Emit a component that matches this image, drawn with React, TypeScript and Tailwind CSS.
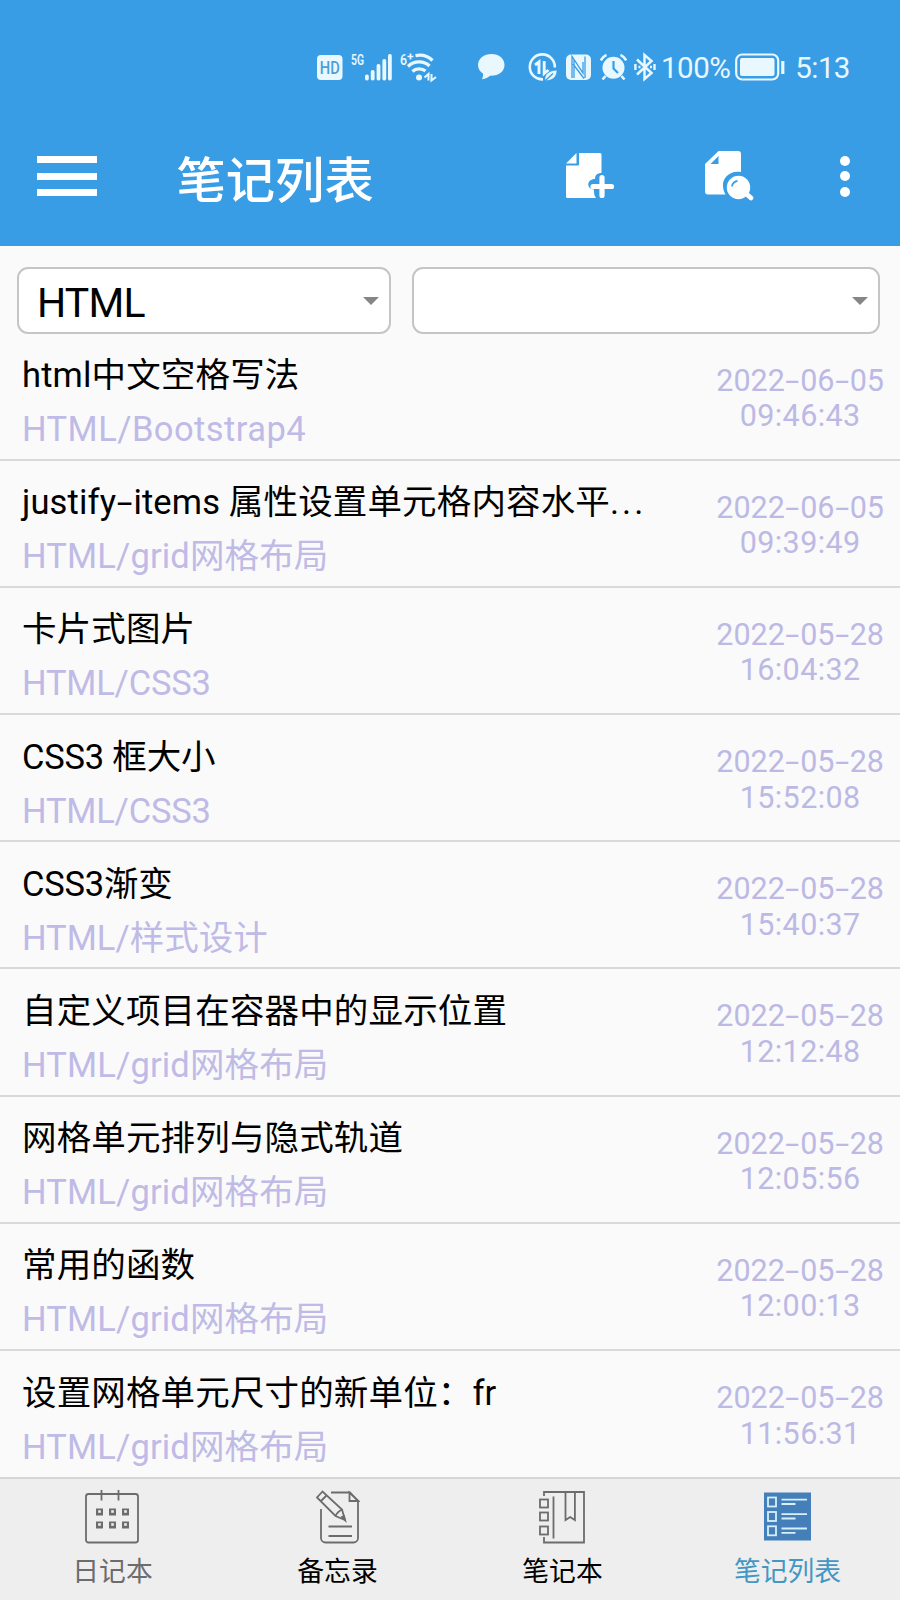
import { clsx } from "clsx";

const notes = [
  { title: "html中文空格写法", path: "HTML/Bootstrap4", date: "2022-06-05", time: "09:46:43" },
  {
    title: "justify-items 属性设置单元格内容水平",
    more: true,
    path: "HTML/grid网格布局",
    date: "2022-06-05",
    time: "09:39:49",
  },
  { title: "卡片式图片", path: "HTML/CSS3", date: "2022-05-28", time: "16:04:32" },
  { title: "CSS3 框大小", path: "HTML/CSS3", date: "2022-05-28", time: "15:52:08" },
  { title: "CSS3渐变", path: "HTML/样式设计", date: "2022-05-28", time: "15:40:37" },
  { title: "自定义项目在容器中的显示位置", path: "HTML/grid网格布局", date: "2022-05-28", time: "12:12:48" },
  { title: "网格单元排列与隐式轨道", path: "HTML/grid网格布局", date: "2022-05-28", time: "12:05:56" },
  { title: "常用的函数", path: "HTML/grid网格布局", date: "2022-05-28", time: "12:00:13" },
  { title: "设置网格单元尺寸的新单位：fr", path: "HTML/grid网格布局", date: "2022-05-28", time: "11:56:31" },
];

const tracking = (text: string) => {
  if (text.includes("Bootstrap")) return "tracking-[0.45px]";
  if (text.includes("CSS3")) return "tracking-[-0.2px]";
  if (text.includes("样式")) return "";
  return "tracking-[0.15px]";
};

// draws the hyphens wider than the font does
function Dashed({ text }: { text: string }) {
  return (
    <>
      {text.split("-").map((part, i) => (
        <span key={i}>
          {i > 0 && (
            <span className="inline-block w-[0.5em] text-center">
              <span className="inline-block scale-x-[1.65]">-</span>
            </span>
          )}
          {part}
        </span>
      ))}
    </>
  );
}

function StatusBar() {
  return (
    <div className="flex h-[134px] items-center pl-[317px] text-[#e9f7ff]">
      {/* HD */}
      <svg width="26" height="28" viewBox="0 0 26 28" fill="currentColor">
        <rect x="0" y="2" width="25.500" height="25" rx="4" />
        <text x="2.800" y="20.700" fontSize="17.500" fontWeight="500" textLength="20" lengthAdjust="spacingAndGlyphs" fill="#4a9fdb" fontFamily="Roboto, sans-serif">
          HD
        </text>
      </svg>
      {/* 5G signal */}
      <svg className="ml-2 overflow-visible" width="41" height="28" viewBox="0 0 41 28" fill="currentColor">
        <text x="0" y="12" fontSize="15" fontWeight="600" textLength="13" lengthAdjust="spacingAndGlyphs" fontFamily="Roboto, sans-serif">
          5G
        </text>
        <rect x="14" y="21.500" width="3.800" height="6" rx="1.700" />
        <rect x="19.800" y="17" width="3.800" height="10.500" rx="1.700" />
        <rect x="25.600" y="11" width="3.800" height="16.500" rx="1.700" />
        <rect x="31.400" y="6" width="3.800" height="21.500" rx="1.700" />
        <rect x="37" y="1" width="3.800" height="26.500" rx="1.700" />
      </svg>
      {/* wifi 6+ */}
      <svg className="ml-2 overflow-visible" width="37" height="28" viewBox="0 0 37 28" fill="none" stroke="currentColor" strokeWidth="3.200">
        <text x="0" y="11.500" fontSize="14.500" fontWeight="600" fill="currentColor" stroke="none" textLength="7" lengthAdjust="spacingAndGlyphs" fontFamily="Roboto, sans-serif">
          6
        </text>
        <path d="M7.500 3.500h6M10.500.500v6" strokeWidth="1.700" />
        <path d="M15.500 2.600C22 1.400 28 3 32.500 7.500" />
        <path d="M8 13.500C14 7.500 24 7.500 29.500 13" />
        <path d="M12.500 18.500C16 15 22 15 25.500 18" />
        <circle cx="19" cy="24.500" r="3" fill="currentColor" stroke="none" />
        <path d="M24.500 24.500L28.500 21v6.500M31.500 21v6.500l4.500-3.500" strokeWidth="2" />
      </svg>
      {/* message */}
      <svg className="ml-[41px]" width="27" height="28" viewBox="0 0 27 28" fill="currentColor">
        <path d="M13.500 1C6 1 0 5.500 0 12c0 3.600 2 6.700 5 8.600.3 2-.2 4-1 5.600 3.500-.2 6-1.600 8-3.400 8.500.4 14.500-4.300 14.500-10.800S21 1 13.500 1z" />
      </svg>
      {/* data saver */}
      <svg className="ml-[23px]" width="29" height="30" viewBox="0 0 29 30" fill="none" stroke="currentColor">
        <path d="M15 27.400A12.500 12.500 0 1 1 26.800 15.500" strokeWidth="2.600" />
        <path d="M7 13L11 10v12" strokeWidth="2.900" />
        <path d="M16.200 9v12.500L20.500 18" strokeWidth="2.900" />
        <path d="M17 28.500c-1-6.500 4-10 12-10.500.3 7-5 11.500-12 10.500z" fill="currentColor" stroke="#399de5" strokeWidth=".800" />
        <path d="M17.500 28.500L25 21.500" stroke="#399de5" strokeWidth="1.300" />
      </svg>
      {/* nfc */}
      <svg className="ml-[9px]" width="26" height="28" viewBox="0 0 26 28">
        <rect x="0" y="1.500" width="25" height="25.500" rx="5" fill="currentColor" />
        <path d="M6 25V3.500L17 20V9M8 7v18M19 25V3.500M7 11l11 14.500" fill="none" stroke="#399de5" strokeWidth="1.300" />
      </svg>
      {/* alarm */}
      <svg className="ml-2" width="27" height="28" viewBox="0 0 27 28" fill="none" stroke="currentColor" strokeWidth="2.600">
        <circle cx="13.500" cy="14.800" r="11" fill="currentColor" stroke="none" />
        <path d="M.800 7.500C2 5 4 3 6.500 1.800M26.200 7.500C25 5 23 3 20.500 1.800M5.500 23l-3 3.500M21.500 23l3 3.500" />
        <path d="M13.500 8v7.500l4.500 4.500" stroke="#399de5" strokeWidth="2.200" />
      </svg>
      {/* bluetooth */}
      <svg className="ml-[7px]" width="22" height="30" viewBox="0 0 22 30" fill="none" stroke="currentColor" strokeWidth="2.500">
        <path d="M3 7.500L17.500 21l-7 6V3l7 6L3 22.500" />
        <path d="M1.400 12v6M4.500 15h2M16 15h2M20.500 12v6" strokeWidth="2.400" />
      </svg>
      <span className="ml-[5px] mt-[4px] text-[29.500px] leading-none tracking-[-0.5px]">100%</span>
      {/* battery */}
      <svg className="ml-[5px]" width="51" height="28" viewBox="0 0 51 28" fill="none" stroke="currentColor">
        <rect x="1.200" y="1.500" width="42" height="25" rx="6" strokeWidth="2.200" />
        <rect x="5" y="5" width="34.500" height="18" rx="2" fill="currentColor" stroke="none" />
        <path d="M47.800 8v13" strokeWidth="3.200" />
      </svg>
      <span className="ml-[9px] mt-[4px] text-[29.500px] leading-none tracking-[-0.6px]">5:13</span>
    </div>
  );
}

function Header() {
  return (
    <header className="h-[246px] shrink-0 bg-[#399de5]">
      <StatusBar />
      <div className="flex h-[84px] items-center text-white">
        <button className="ml-[36.500px] flex w-[60.500px] flex-col gap-[9.500px]">
          <span className="h-[7px] w-full bg-white" />
          <span className="h-[7px] w-full bg-white" />
          <span className="h-[7px] w-full bg-white" />
        </button>
        <h1 className="ml-[79.500px] mt-[11px] w-[200px] text-[49.300px] font-medium leading-none whitespace-nowrap">笔记列表</h1>
        <button className="ml-[189px]">
          <svg width="49" height="50" viewBox="0 0 49 50" fill="currentColor">
            <path d="M13 2h21a1.500 1.500 0 0 1 1.500 1.500V22c-4 0-6.500 2-6.500 6-8.500 0-9 10-1 10.500v1.500c0 3 .5 5 2 7H1.500A1.500 1.500 0 0 1 0 45.500V14.500h12a1 1 0 0 0 1-1z" />
            <path d="M10.500 2v10.500H0z" />
            <path d="M36 26.500v18M27 35.500h18.500" stroke="currentColor" strokeWidth="5.200" strokeLinecap="round" />
          </svg>
        </button>
        <button className="ml-[90px]">
          <svg width="50" height="52" viewBox="0 0 50 52" fill="currentColor">
            <path fillRule="evenodd" d="M13.500 1H33a3 3 0 0 1 3 3v18c-11-2-19 6-18 14.500.3 3 1 5.500 2.500 8H3a3 3 0 0 1-3-3V14zM13.500 6v8H5.500z" />
            <circle cx="33.500" cy="37.500" r="11.700" />
            <path d="M41 43.500l5 4.500" stroke="currentColor" strokeWidth="4.800" strokeLinecap="round" />
            <path d="M27 36.500c.3-3 2.500-5 5.500-5.600" fill="none" stroke="#399de5" strokeWidth="1.800" />
          </svg>
        </button>
        <button className="ml-[85px] flex flex-col gap-[5.500px]">
          <span className="h-2.5 w-2.5 rounded-full bg-white" />
          <span className="h-2.5 w-2.5 rounded-full bg-white" />
          <span className="h-2.5 w-2.5 rounded-full bg-white" />
        </button>
      </div>
    </header>
  );
}

function Dropdown({ value, className }: { value: string; className: string }) {
  return (
    <div className={clsx("flex h-[67px] items-center justify-between rounded-[11px] border-2 border-[#c5c5c5] bg-white", className)}>
      <span className="pl-[18px] pt-[5px] text-[41px] leading-none tracking-[-0.8px]">{value}</span>
      <svg width="16" height="8" viewBox="0 0 16 8" fill="#868686">
        <path d="M0 0h16L8 8z" />
      </svg>
    </div>
  );
}

function CalendarIcon() {
  return (
    <svg className="mr-px" width="54" height="54" viewBox="0 0 54 54" fill="none" stroke="#6c6c6c" strokeWidth="1.800">
      <rect x="1" y="4" width="52" height="48.500" rx="2.500" />
      <path d="M16.500 0v10.500M33.500 0v10.500" />
      {[14.5, 27.5, 40.5].map((x) =>
        [21.5, 34.5].map((y) => (
          <g key={x + "-" + y}>
            <rect x={x - 3.5} y={y - 3} width="7" height="7" fill="#6c6c6c" stroke="none" />
            <rect x={x - 1.3} y={y - 1.3} width="2.600" height="2.600" fill="#eee" stroke="none" />
          </g>
        ))
      )}
    </svg>
  );
}

function MemoIcon() {
  return (
    <svg width="44" height="54" viewBox="0 0 44 54" fill="none" stroke="#6c6c6c" strokeWidth="1.800">
      <path d="M15 2.500h19l8 8.500v37a4.500 4.500 0 0 1-4.500 4.500H9.500A4.500 4.500 0 0 1 5 48V19" />
      <path d="M33.500 2.500V11h9z" />
      <path d="M6.500 1.500L1 7.500 19.500 26l9.500 4-3-10.500zM10.500 5.500L4.500 11.500M26 19.500c-2 1-5.500 4-6.500 6.500M12.500 36.500H36M12.500 46H36" />
      <path d="M26 27l3 3-1-4z" fill="#6c6c6c" />
    </svg>
  );
}

function NotebookIcon() {
  return (
    <svg className="mr-0.5" width="46" height="54" viewBox="0 0 46 54" fill="none" stroke="#6c6c6c" strokeWidth="1.800">
      <path d="M5 6V2h40v50.500H5V47M14.500 6.500v42M26.500 2v28l4.700-3 4.700 3V2" />
      <rect x="1" y="9.500" width="8" height="8" />
      <rect x="1" y="22.500" width="8" height="8" />
      <rect x="1" y="36.500" width="8" height="8" />
    </svg>
  );
}

function ListIcon() {
  return (
    <svg width="47" height="54" viewBox="0 0 47 54" fill="none" stroke="#d5f0fb" strokeWidth="1.800">
      <rect x="0" y="2.500" width="47" height="48" fill="#447fb9" stroke="none" />
      {[12, 26.5, 40.8].map((y) => (
        <g key={y}>
          <rect x="4" y={y - 4.5} width="8" height="9" />
          <path d={`M17.500 ${y - 2.3}h25.500M17.500 ${y + 2}h14`} />
        </g>
      ))}
    </svg>
  );
}

const tabs = [
  { label: "日记本", icon: <CalendarIcon />, color: "text-[#6c6c6c]" },
  { label: "备忘录", icon: <MemoIcon />, color: "text-black" },
  { label: "笔记本", icon: <NotebookIcon />, color: "text-black" },
  { label: "笔记列表", icon: <ListIcon />, color: "text-[#4297c4]" },
];

export default function App() {
  return (
    <div className="flex h-[1600px] w-[900px] flex-col overflow-hidden bg-[#fafafa] font-[Roboto,'Noto_Sans_CJK_SC',sans-serif] text-black">
      <Header />
      <div className="flex h-[87.500px] shrink-0 pl-[17px] pt-[21px]">
        <Dropdown value="HTML" className="w-[374px] pr-[10.500px]" />
        <Dropdown value="" className="ml-[21px] w-[468px] pr-[10.500px]" />
      </div>

      <main className="flex-1 overflow-hidden">
        {notes.map((note) => (
          <div key={note.title} className="flex h-[127.200px] justify-between border-b-2 border-[#d9d9d9] pl-[22px] pr-[16px] last:border-b-0">
            <div className="pt-[17.500px] whitespace-nowrap">
              <p className={clsx("text-[34.500px] leading-[48px]", tracking(note.title))}>
                <Dashed text={note.title} />
                {note.more && <span className="tracking-[3px]">...</span>}
              </p>
              <p className={clsx("mt-[6px] text-[34.500px] leading-[48px] text-[#bfbae6]", tracking(note.path))}>{note.path}</p>
            </div>
            <div className="pt-[29px] text-center text-[30.500px] leading-[35.500px] text-[#bcb9e5]">
              <p>
                <Dashed text={note.date} />
              </p>
              <p className="tracking-[0.4px]">{note.time}</p>
            </div>
          </div>
        ))}
      </main>

      <nav className="grid h-[123px] shrink-0 grid-cols-4 border-t-2 border-[#d6d6d6] bg-[#eeeeee]">
        {tabs.map((tab) => (
          <div key={tab.label} className={clsx("flex flex-col items-center pt-[11px]", tab.color)}>
            {tab.icon}
            <span className="mt-[10px] text-[26.800px] leading-[36px]">{tab.label}</span>
          </div>
        ))}
      </nav>
    </div>
  );
}
